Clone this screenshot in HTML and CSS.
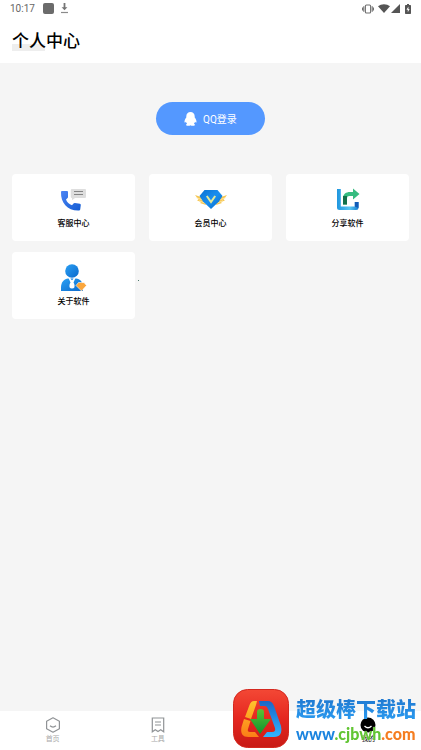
FILE: index.html
```html
<!DOCTYPE html>
<html lang="zh-CN">
<head>
    <meta charset="UTF-8">
    <meta name="viewport" content="width=device-width, initial-scale=1.0">
    <title>个人中心</title>
    <link rel="stylesheet" href="styles.css">
</head>
<body>
    <header class="header">
        <div class="status-bar">
            <span class="time">10:17</span>
            <span class="status-square"></span>
            <svg width="9" height="11" viewBox="0 0 9 11"><path d="M3.6 0h1.8v4.2h2L4.5 7.3 1.6 4.2h2z" fill="#757575"/><path d="M1 9.5h7" stroke="#8a8a8a" stroke-width="1.2"/></svg>
            <div class="status-right">
                <svg width="12" height="10" viewBox="0 0 12 10" fill="none" stroke="#707070" stroke-width="1.1"><rect x="3.4" y="1" width="5.2" height="8" rx="1"/><path d="M1.8 2.2v5.6M10.2 2.2v5.6M.5 3.6v2.8M11.5 3.6v2.8"/></svg>
                <svg class="wifi" width="12" height="9" viewBox="0 0 12 9"><path d="M0 2.3C3.4-.5 8.6-.5 12 2.3L6 9z" fill="#555"/></svg>
                <svg width="9" height="9" viewBox="0 0 9 9"><path d="M9 0v9H0z" fill="#555"/></svg>
                <svg class="battery" width="6" height="10" viewBox="0 0 6 10"><path d="M2 0h2v1h1.3q.7 0 .7.7v7.6q0 .7-.7.7H.7Q0 10 0 9.300V1.700Q0 1 .7 1H2z" fill="#555"/><path d="M3.400 2.500 1.500 5.800h1.300v2.500L4.600 5H3.400z" fill="#fff"/></svg>
            </div>
        </div>
        <h1 class="title">个人中心</h1>
    </header>

    <main class="content">
        <button class="login-btn" type="button">
            <svg width="13" height="14" viewBox="0 0 13 14"><path d="M6.500 0C4 0 2.300 1.900 2.300 4.200v1.300C1 7 .4 8.800.5 10.200c.1.700.7.500 1.400-.5.200.8.600 1.500 1.200 2-.8.300-1.100.8-1 1.300.2 1.100 3.600 1 4.400.3.800.7 4.200.8 4.400-.3.100-.5-.2-1-1-1.300.6-.5 1-1.200 1.200-2 .7 1 1.300 1.200 1.400.5.100-1.400-.5-3.200-1.800-4.700V4.200C10.700 1.900 9 0 6.500 0z" fill="#fff"/></svg>
            <span>QQ登录</span>
        </button>

        <div class="card-list">
            <button class="card" type="button">
                <svg width="32" height="28" viewBox="0 0 32 28">
                    <defs><linearGradient id="phone" x2="1" y2="1"><stop stop-color="#4b84f4"/><stop offset="1" stop-color="#135cd3"/></linearGradient></defs>
                    <path d="M4 5h5q1 0 1 1v5q0 .8-.7 1.200L8 13.500c1 2.800 3 4.700 6 5.700l1.500-1.700q.6-.5 1.400-.4l5 .7q1 .2.900 1.200l-.6 4.600q-.2 1-1.200 1C9.500 25 2.600 17 3 6q0-1 1-1z" fill="url(#phone)"/>
                    <path d="M14 3h13q1 0 1 1v7q0 1-1 1H17l-3 2.200V12q-1.200 0-1.200-1V4q0-1 1.200-1z" fill="#dedede"/>
                    <path d="M16 5.500h9M16 8.500h9" stroke="#858585"/>
                </svg>
                <span>客服中心</span>
            </button>
            <button class="card" type="button">
                <svg width="32" height="28" viewBox="0 0 32 28">
                    <defs><linearGradient id="gem" x2="1" y2="1"><stop stop-color="#0b71d1"/><stop offset=".5" stop-color="#198ff0"/><stop offset="1" stop-color="#0769c4"/></linearGradient></defs>
                    <path d="M0 9 9 12l2 7-6-2 1-.8-4-2 1.500-.7zM32 9 23 12l-2 7 6-2-1-.8 4-2-1.500-.7z" fill="#f6c54f"/>
                    <path d="M1 11.500l8 3M4 14.800l6 2.200M31 11.500l-8 3M28 14.800 22 17" stroke="#fff1c0" stroke-width=".7"/>
                    <path d="M9.500 4h13l5 6L24 15.500 16 23 8 15.500 4.500 10z" fill="url(#gem)"/>
                    <path d="m11.800 10 4.200 6 4.200-6" fill="none" stroke="#e3e99c" stroke-width="2"/>
                </svg>
                <span>会员中心</span>
            </button>
            <button class="card" type="button">
                <svg width="32" height="28" viewBox="0 0 32 28">
                    <defs>
                        <linearGradient id="frame" x2="1"><stop stop-color="#1f96df"/><stop offset=".6" stop-color="#58c7f3"/><stop offset="1" stop-color="#147cd1"/></linearGradient>
                    </defs>
                    <path d="M5 3h3.800v17.500h14V16h3.700v5.500q0 2.500-2.500 2.500H7.500Q5 24 5 21.500z" fill="url(#frame)"/>
                    <path d="M22.800 16h3.700v6l-3.700-1.500z" fill="#125bb7"/>
                    <path d="M11 18.500v-6C11 8 14 6 18 6h3V2.500L27.500 8 21 13.500V10h-3.500c-1.800 0-2.500.8-2.500 2.500v6z" fill="#36bc80"/>
                    <path d="M11 10h4v8.500h-4z" fill="#12704a"/>
                </svg>
                <span>分享软件</span>
            </button>
            <button class="card card-about" type="button">
                <svg width="32" height="28" viewBox="0 0 32 28">
                    <defs><linearGradient id="user" x2="1" y2="1"><stop stop-color="#2aa0f4"/><stop offset="1" stop-color="#0b69cc"/></linearGradient></defs>
                    <circle cx="14" cy="7" r="6.800" fill="url(#user)"/>
                    <path d="M3 27v-3.500C3 18 6.500 14.500 10 14.500h8c4 0 7 3.500 7 9V27z" fill="url(#user)"/>
                    <path d="M10.500 14h7l-2 4.500.8 1.500q1.200 4.500-2.300 4.500T11.700 20l.8-1.500z" fill="#fff"/>
                    <path d="m12.300 14.500 1.700 1.700 1.700-1.700z" fill="#1680df"/>
                    <path d="M20.500 18.500h5.500l2.500 3-5 5.500-5.500-5.500z" fill="#faa63d" stroke="#fff" stroke-width=".6"/>
                </svg>
                <span>关于软件</span>
            </button>
        </div>
    </main>

    <nav class="tab-bar">
        <a class="tab" href="#">
            <svg width="16" height="16" viewBox="0 0 16 16" fill="none" stroke="#909396" stroke-width="1.200"><path d="M8 .8 14.400 4.300v7.400L8 15.200l-6.400-3.500V4.300z" stroke-linejoin="round"/><path d="M5 8.800q3 2.600 6 0"/></svg>
            <span>首页</span>
        </a>
        <a class="tab" href="#">
            <svg width="16" height="16" viewBox="0 0 16 16" fill="none" stroke="#909396" stroke-width="1.200"><path d="M2.300 1h11.400v13.800l-3-2L8 14.500l-2.700-1.700-3 2z"/><path d="M5 5h6M5 8h6"/></svg>
            <span>工具</span>
        </a>
        <a class="tab tab-me active" href="#">
            <svg width="16" height="16" viewBox="0 0 16 16"><circle cx="8" cy="8" r="7.500"/><path d="M4.500 9q3.500 3.500 7 0" fill="none" stroke="#fff" stroke-width="1.300"/></svg>
            <span>我的</span>
        </a>
    </nav>

    <div class="watermark">
        <svg width="56" height="60" viewBox="0 0 56 60">
            <defs>
                <linearGradient id="red" x2="0" y2="1"><stop stop-color="#f34835"/><stop offset=".5" stop-color="#e52720"/><stop offset="1" stop-color="#c81a15"/></linearGradient>
                <linearGradient id="orange" x2="0" y2="1"><stop stop-color="#ffc52c"/><stop offset="1" stop-color="#fb7d17"/></linearGradient>
                <linearGradient id="blue" x2="0" y2="1"><stop stop-color="#1a66c8"/><stop offset="1" stop-color="#32b4ff"/></linearGradient>
                <linearGradient id="green" x2="0" y2="1"><stop stop-color="#5cc032"/><stop offset="1" stop-color="#0d9430"/></linearGradient>
            </defs>
            <rect x=".5" y=".5" width="55" height="58" rx="14" fill="url(#red)" stroke="#d4281f"/>
            <path d="M24 12h-3q-3 0-4.500 4L12 28l6 2 5-14zM11 30 8.500 38q-2 10 7 10H26l-4-5h-5q-3 0-2-3l2.500-8z" fill="url(#orange)"/>
            <path d="M26 12h9q4 0 6 5l7 20q2 11-7 11H30l4-5h5q4 0 3-4l-7-19q-1-3-3-3h-5z" fill="url(#blue)"/>
            <path d="M24 23q0-3 3.500-3t3.500 3v7h7L27 45 17 30h7z" fill="url(#green)"/>
        </svg>
        <div class="watermark-text">
            <strong class="site-name">超级棒下载站</strong>
            <strong class="site-url"><span class="url-blue">www</span><span class="url-green">.cjbwh</span><span class="url-orange">.com</span></strong>
        </div>
    </div>
</body>
</html>
```
FILE: styles.css
```css
* { margin: 0; padding: 0; box-sizing: border-box; }
body {
    min-height: 100vh; display: flex; flex-direction: column;
    font-family: Roboto, "Noto Sans CJK SC", sans-serif; background-color: #f5f5f5; color: #000;
}
button { border: none; font-family: inherit; cursor: pointer; }
svg { display: block; flex-shrink: 0; }

.header { background-color: #fff; padding: 0 10px 10px 10px; }
.status-bar { display: flex; align-items: center; height: 17px; font-size: 10px; color: #666; }
.status-square { width: 11px; height: 11px; margin: 0 6px 0 8px; border-radius: 2px; background-color: #6b6b6b; }
.status-right { display: flex; align-items: center; margin-left: auto; }
.wifi { margin: 0 1px 0 4px; }
.battery { margin-left: 5px; }
.title {
    width: fit-content; margin: 12px 2px 0; font-size: 17px; line-height: 24px; font-weight: 500;
    background: linear-gradient(#eee, #eee) 0 15px / 33px 7px no-repeat;
}

.content { flex: 1; padding: 39px 12px; }
.login-btn {
    display: flex; align-items: center; justify-content: center; gap: 6px;
    width: 109px; height: 33px; margin: 0 auto 39px; border-radius: 17px;
    background-color: #5498ff; color: #fff; font-size: 10px;
}
.card-list { display: grid; grid-template-columns: repeat(3, 1fr); gap: 11px 14px; }
.card {
    display: flex; flex-direction: column; align-items: center;
    padding: 12px 0 11px; border-radius: 4px; background-color: #fff;
    font-size: 8px; line-height: 12px; font-weight: 500; color: #000; gap: 4px;
}
.card-about { position: relative; }
.card-about::after {
    content: ""; position: absolute; right: -4px; top: 28px;
    width: 1px; height: 1px; background-color: #4d7a6c;
}

.tab-bar { display: grid; grid-template-columns: repeat(4, 1fr); padding: 6px 0 5px; background-color: #fff; }
.tab {
    display: flex; flex-direction: column; align-items: center;
    font-size: 7px; line-height: 12px; color: #aaa; text-decoration: none;
}
.tab-me { grid-column: 4; }
.active { color: #000; }

.watermark { position: fixed; right: 2px; bottom: 1px; display: flex; gap: 7px; pointer-events: none; }
.watermark-text { display: flex; flex-direction: column; width: 123px; padding-top: 7px; }
.site-name {
    font-size: 20px; line-height: 28px; font-weight: 900;
    background: linear-gradient(#1e74cc, #2da2f7); background-clip: text; -webkit-background-clip: text; color: transparent;
}
.site-url { font-family: Lato, "Open Sans", sans-serif; font-size: 16px; line-height: 20px; font-weight: 900; text-shadow: 0 0 1px #fff; }
.url-blue { color: #1b84df; }
.url-green { color: #62c534; }
.url-orange { color: #f57d20; }
```
